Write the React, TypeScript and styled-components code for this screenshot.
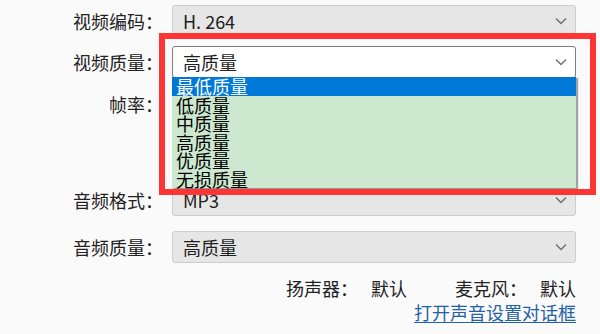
import styled, { createGlobalStyle } from 'styled-components';

const GlobalStyle = createGlobalStyle`
  html, body {
    margin: 0;
    padding: 0;
    background: #fafafa;
  }
  body {
    font-family: 'Noto Sans CJK SC', 'Noto Sans', sans-serif;
    color: #222;
  }
`;

const Page = styled.div`
  position: relative;
  width: 600px;
  height: 334px;
  overflow: hidden;
  background: #fafafa;
`;

const Form = styled.div`
  display: flex;
  flex-direction: column;
  padding-top: 5px;
`;

const Row = styled.div<{ $mt?: number }>`
  display: grid;
  grid-template-columns: 163px 404px;
  column-gap: 9px;
  align-items: center;
  height: 32px;
  margin-top: ${(p) => p.$mt ?? 0}px;
`;

const Label = styled.span`
  text-align: right;
  font-size: 18px;
  line-height: 32px;
  white-space: nowrap;
`;

const Combo = styled.div<{ $focused?: boolean }>`
  position: relative;
  display: flex;
  align-items: center;
  justify-content: space-between;
  box-sizing: border-box;
  height: 32px;
  padding: 0 8px 0 10px;
  border: 1px solid ${(p) => (p.$focused ? '#7d7d7d' : '#cdcdcd')};
  border-radius: 3px;
  background: ${(p) => (p.$focused ? '#ffffff' : '#e6e6e6')};
  font-size: 18px;
  color: #1e1e1e;
`;

const Chevron = () => (
  <svg width="12" height="8" viewBox="0 0 12 8">
    <path d="M1 1.5 L6 6.5 L11 1.5" fill="none" stroke="#6f6f6f" strokeWidth="1.4" />
  </svg>
);

const List = styled.ul`
  position: absolute;
  top: 100%;
  left: -1px;
  width: 404px;
  margin: 0;
  padding: 0;
  list-style: none;
  background: #cce8cf;
  box-shadow: 2px 1px 1px rgba(0, 0, 0, 0.35);
  z-index: 2;
`;

const Item = styled.li<{ $selected?: boolean }>`
  height: 18.5px;
  line-height: 18.5px;
  padding-left: 4px;
  font-size: 18px;
  color: ${(p) => (p.$selected ? '#ffffff' : '#000000')};
  background: ${(p) => (p.$selected ? '#0078d7' : 'transparent')};
`;

const Footer = styled.div`
  display: flex;
  flex-direction: column;
  align-items: flex-end;
  width: 576px;
  margin-top: 14px;
  font-size: 18px;
`;

const DeviceLine = styled.div`
  display: flex;
  gap: 48px;
  line-height: 22px;
`;

const Pair = styled.span`
  display: flex;
  gap: 13px;
`;

const Link = styled.a`
  margin-top: 2px;
  line-height: 22px;
  color: #2361a6;
  text-decoration: underline;
  text-underline-offset: 2px;
`;

const Highlight = styled.div`
  position: absolute;
  left: 159px;
  top: 33px;
  width: 437px;
  height: 162px;
  box-sizing: border-box;
  border: 6px solid #fd3535;
  z-index: 3;
  pointer-events: none;
`;

const qualities = ['最低质量', '低质量', '中质量', '高质量', '优质量', '无损质量'];

export default function App() {
  return (
    <Page>
      <GlobalStyle />
      <Form>
        <Row>
          <Label>视频编码：</Label>
          <Combo>
            <span>H. 264</span>
            <Chevron />
          </Combo>
        </Row>
        <Row $mt={9}>
          <Label>视频质量：</Label>
          <Combo $focused>
            <span>高质量</span>
            <Chevron />
            <List>
              {qualities.map((q, i) => (
                <Item key={q} $selected={i === 0}>
                  {q}
                </Item>
              ))}
            </List>
          </Combo>
        </Row>
        <Row $mt={10}>
          <Label>帧率：</Label>
          <Combo>
            <span>30</span>
            <Chevron />
          </Combo>
        </Row>
        <Row $mt={64}>
          <Label>音频格式：</Label>
          <Combo>
            <span>MP3</span>
            <Chevron />
          </Combo>
        </Row>
        <Row $mt={15}>
          <Label>音频质量：</Label>
          <Combo>
            <span>高质量</span>
            <Chevron />
          </Combo>
        </Row>
      </Form>
      <Footer>
        <DeviceLine>
          <Pair>
            <span>扬声器：</span>
            <span>默认</span>
          </Pair>
          <Pair>
            <span>麦克风：</span>
            <span>默认</span>
          </Pair>
        </DeviceLine>
        <Link href="#">打开声音设置对话框</Link>
      </Footer>
      <Highlight />
    </Page>
  );
}
